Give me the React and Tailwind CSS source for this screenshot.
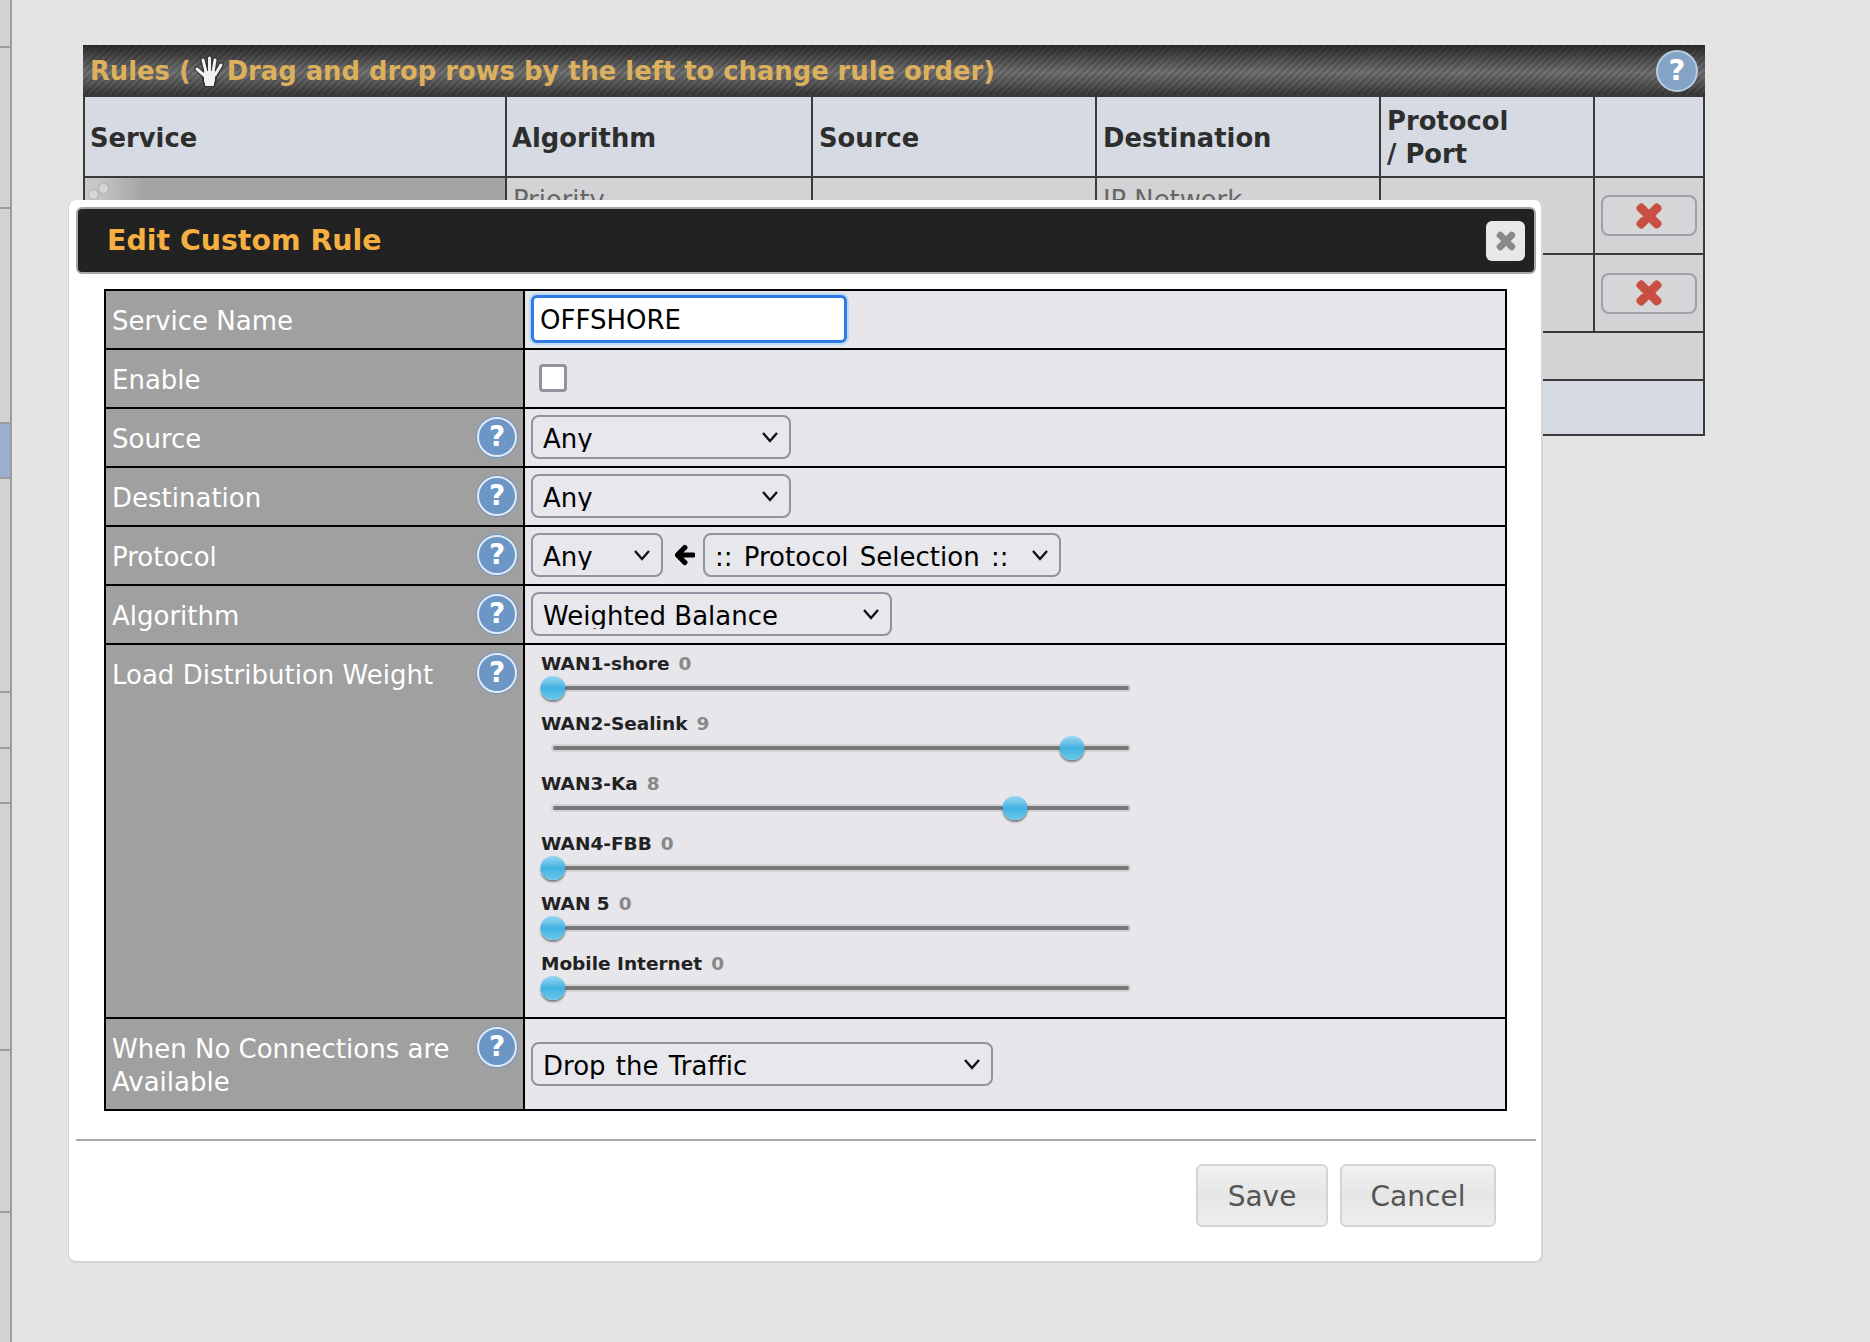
import React from 'react'
import { FaTimes, FaArrowLeft } from 'react-icons/fa'

const sideItems = [
  { h: 'h-[48px]' },
  { h: 'h-[161px]' },
  { h: 'h-[215px]' },
  { h: 'h-[55px]', active: true },
  { h: 'h-[214px]' },
  { h: 'h-[56px]' },
  { h: 'h-[55px]' },
  { h: 'h-[247px]' },
  { h: 'h-[162px]' },
]

const sliders = [
  { name: 'WAN1-shore', value: 0 },
  { name: 'WAN2-Sealink', value: 9 },
  { name: 'WAN3-Ka', value: 8 },
  { name: 'WAN4-FBB', value: 0 },
  { name: 'WAN 5', value: 0 },
  { name: 'Mobile Internet', value: 0 },
]

const handFingers = 'M11 21 L3 14 M12 17 L9 5 M15.5 16 L15.5 3 M19 17 L21 5 M21 20 L27 10'

function HandIcon() {
  return (
    <svg width="30" height="32" viewBox="0 0 30 32" className="mr-[3px] ml-[3px] shrink-0">
      <path d={handFingers} stroke="#333" strokeWidth="5.5" strokeLinecap="round" fill="none" />
      <path d="M9 15 L22 15 L22 24 L20 32 L11 32 L9 25 Z" fill="#f2f2f2" stroke="#333" strokeWidth="2" />
      <path d={handFingers} stroke="#f2f2f2" strokeWidth="3" strokeLinecap="round" fill="none" />
      <path d="M10 16 L21 16 L21 24 L19.5 31 L11.5 31 L10 25 Z" fill="#f2f2f2" />
    </svg>
  )
}

function HelpIcon({ className = '' }) {
  return (
    <span className={`flex h-[40px] w-[40px] shrink-0 items-center justify-center rounded-full border-2 border-[#e4e9f2] bg-[#6c96c6] text-[28px] leading-none font-bold text-white shadow-[0_0_0_1px_#6c96c6] ${className}`}>
      ?
    </span>
  )
}

function Chevron() {
  return (
    <svg width="18" height="12" viewBox="0 0 18 12" className="pointer-events-none absolute top-1/2 right-[12px] -translate-y-1/2">
      <path d="M2 2 L9 10 L16 2" fill="none" stroke="#111" strokeWidth="2.4" />
    </svg>
  )
}

function Select({ value, width, extra = '' }) {
  return (
    <div className={`relative shrink-0 ${width}`}>
      <select defaultValue={value} className={`h-[44px] w-full appearance-none rounded-lg border-2 border-[#9292a0] bg-[#e7e7ec] pt-[4px] pl-[10px] text-[26px] leading-none text-black [font-variant-ligatures:none] ${extra}`}>
        <option>{value}</option>
      </select>
      <Chevron />
    </div>
  )
}

function Row({ label, help, height = 'h-[59.1px]', last, top, children }) {
  return (
    <div className={`flex ${height} ${last ? '' : 'border-b-2 border-black'}`}>
      <div className={`relative flex w-[417px] shrink-0 bg-[#a0a0a0] pl-[6px] text-[26px] leading-[33px] text-white ${top ? 'pt-[14px]' : 'items-center pt-[4px]'}`}>
        <span className="w-[350px]">{label}</span>
        {help && <HelpIcon className="absolute top-[8px] right-[6px]" />}
      </div>
      <div className="flex flex-1 items-center border-l-2 border-black bg-[#e6e6eb] pl-[6px]">{children}</div>
    </div>
  )
}

function Slider({ name, value }) {
  return (
    <div className="h-[60px] pt-[7px] pl-[10px]">
      <div className="flex h-[24px] items-center gap-[9px] text-[18.5px] font-bold text-[#222]">
        <span>{name}</span>
        <span className="text-[#888]">{value}</span>
      </div>
      <div className="relative mt-[8px] ml-[10px] h-[8px] w-[580px] rounded border-2 border-[#d3d3d6] bg-[#777]">
        <span
          className="absolute top-[-10px] h-[24px] w-[25px] -translate-x-1/2 rounded-full bg-gradient-to-b from-[#9ad6ee] via-[#3fb2e2] to-[#6cc8ea] shadow-[0_2px_2px_rgba(0,0,0,0.45)]"
          style={{ left: `${value * 57.7}px` }}
        />
      </div>
    </div>
  )
}

function RemoveButton() {
  return (
    <div className="mx-auto flex h-[41px] w-[96px] items-center justify-center rounded-lg border-2 border-[#a0a0aa] bg-[#d6d6d9]">
      <FaTimes className="text-[32px] text-[#c94f42]" stroke="currentColor" strokeWidth={50} />
    </div>
  )
}

export default function App() {
  const cell = 'border-2 border-[#3a3a3a]'

  return (
    <div className="relative flex min-h-[1342px] overflow-hidden bg-[#e4e4e4] font-['DejaVu_Sans',sans-serif]">
      {/* left nav strip */}
      <div className="w-[12px] shrink-0 border-r-2 border-[#9c9c9c] bg-[#d2d2d2]">
        {sideItems.map((item, i) => (
          <div key={i} className={`${item.h} border-b-2 border-[#9c9c9c] ${item.active ? 'bg-[#9aafcd]' : ''}`} />
        ))}
      </div>

      {/* rules table behind the dialog */}
      <div className="mt-[45px] ml-[71px] w-[1622px]">
        <div className="flex h-[50px] items-center justify-between bg-[repeating-linear-gradient(135deg,rgba(0,0,0,0.16)_0px,rgba(0,0,0,0.16)_2px,transparent_2px,transparent_5px),linear-gradient(to_bottom,#2b2b2b,#727272_55%,#3a3a3a)] pt-[2px] pr-[7px] pl-[7px]">
          <div className="flex items-center text-[25.8px] font-bold text-[#dcb05c]">
            <span>Rules (</span>
            <HandIcon />
            <span>Drag and drop rows by the left to change rule order)</span>
          </div>
          <span className="flex h-[42px] w-[42px] items-center justify-center rounded-full border-2 border-[#b9cde2] bg-[#84a4c6] text-[29px] font-bold text-white">?</span>
        </div>
        <table className="w-[1620px] table-fixed border-collapse text-left text-[25.8px] leading-[33px]">
          <colgroup>
            <col className="w-[422px]" />
            <col className="w-[306px]" />
            <col className="w-[284px]" />
            <col className="w-[284px]" />
            <col className="w-[214px]" />
            <col className="w-[110px]" />
          </colgroup>
          <thead>
            <tr className="h-[81px] bg-[#d6dbe3] text-[#2e2e2e]">
              <th className={`${cell} pt-[3px] pl-[5px]`}>Service</th>
              <th className={`${cell} pt-[3px] pl-[5px]`}>Algorithm</th>
              <th className={`${cell} pt-[3px] pl-[6px]`}>Source</th>
              <th className={`${cell} pt-[3px] pl-[6px]`}>Destination</th>
              <th className={`${cell} pt-[3px] pl-[6px]`}>Protocol<br />/ Port</th>
              <th className={cell}></th>
            </tr>
          </thead>
          <tbody className="bg-[#d3d3d5] text-[#666]">
            <tr className="h-[77px]">
              <td className={`${cell} relative bg-gradient-to-r from-[#c8c8c8] from-[2%] to-[#a4a4a4] to-[14%]`}>
                <span className="absolute top-[6px] left-[14px] h-[9px] w-[9px] rounded-full bg-[#d6d6d6] shadow-[0_0_2px_#8a8a8a]" />
                <span className="absolute top-[12px] left-[4px] h-[9px] w-[9px] rounded-full bg-[#d6d6d6] shadow-[0_0_2px_#8a8a8a]" />
              </td>
              <td className={`${cell} pt-[6px] pl-[6px] align-top`}>Priority</td>
              <td className={cell}></td>
              <td className={`${cell} pt-[6px] pl-[6px] align-top`}>IP Network</td>
              <td className={cell}></td>
              <td className={cell}><RemoveButton /></td>
            </tr>
            <tr className="h-[78px]">
              <td className={`${cell} bg-[#a4a4a4]`}></td>
              <td className={cell}></td>
              <td className={cell}></td>
              <td className={cell}></td>
              <td className={cell}></td>
              <td className={cell}><RemoveButton /></td>
            </tr>
            <tr className="h-[48px]">
              <td className={cell} colSpan={6}></td>
            </tr>
            <tr className="h-[55px] bg-[#d6dbe3]">
              <td className={cell} colSpan={6}></td>
            </tr>
          </tbody>
        </table>
      </div>

      {/* dialog */}
      <div className="absolute top-[200px] left-[68px] h-[1063px] w-[1475px] rounded-lg border-r-2 border-b-2 border-l border-[#d4d4d4] bg-white pt-[7px]">
        <div className="mr-[5px] ml-[7px] flex h-[67px] items-center justify-between rounded-md border-2 border-[#a8a8a8] bg-[#222] pr-[9px] pl-[29px]">
          <span className="pt-[2px] text-[28.4px] font-bold text-[#f5b041]">Edit Custom Rule</span>
          <span className="flex h-[40px] w-[39px] items-center justify-center rounded-md bg-[#e8e8e8] text-[#8a8a8a]">
            <FaTimes className="text-[24px]" stroke="currentColor" strokeWidth={50} />
          </span>
        </div>

        <div className="mt-[15px] mr-[34px] ml-[35px] h-[822px] border-2 border-black">
          <Row label="Service Name" height="h-[58.5px]">
            <input
              defaultValue="OFFSHORE"
              className="h-[48px] w-[316px] rounded-md border-[3px] border-[#2f7ae5] bg-white pt-[2px] pl-[6px] text-[26px] text-black shadow-[0_0_0_2px_#bcd8f7] outline-none"
            />
          </Row>
          <Row label="Enable">
            <input type="checkbox" className="ml-[8px] h-[28px] w-[28px] appearance-none rounded-[4px] border-[3px] border-[#93939c] bg-white" />
          </Row>
          <Row label="Source" help><Select value="Any" width="w-[260px]" /></Row>
          <Row label="Destination" help><Select value="Any" width="w-[260px]" /></Row>
          <Row label="Protocol" help>
            <Select value="Any" width="w-[132px]" />
            <FaArrowLeft className="mr-[8px] ml-[12px] h-[22px] w-[20px] shrink-0 text-black" stroke="currentColor" strokeWidth={40} />
            <Select value=":: Protocol Selection ::" width="w-[358px]" extra="[word-spacing:3px]" />
          </Row>
          <Row label="Algorithm" help><Select value="Weighted Balance" width="w-[361px]" /></Row>
          <Row label="Load Distribution Weight" help top height="h-[374px]">
            <div className="w-full self-start">
              {sliders.map((s) => <Slider key={s.name} name={s.name} value={s.value} />)}
            </div>
          </Row>
          <Row label="When No Connections are Available" help top last height="h-[90px]">
            <Select value="Drop the Traffic" width="w-[462px]" extra="[word-spacing:2px]" />
          </Row>
        </div>

        <div className="mt-[28px] mr-[5px] ml-[7px] border-t-2 border-[#a8a8a8]" />

        <div className="mt-[23px] flex justify-end gap-[12px] pr-[45px]">
          <button className="h-[63px] w-[132px] rounded-md border-2 border-[#d4d4d4] bg-gradient-to-b from-[#f1f1f1] via-[#e6e6e6] to-[#eeeeee] pt-[2px] text-[28px] text-[#555]">Save</button>
          <button className="h-[63px] w-[156px] rounded-md border-2 border-[#d4d4d4] bg-gradient-to-b from-[#f1f1f1] via-[#e6e6e6] to-[#eeeeee] pt-[2px] text-[28px] text-[#555]">Cancel</button>
        </div>
      </div>
    </div>
  )
}
